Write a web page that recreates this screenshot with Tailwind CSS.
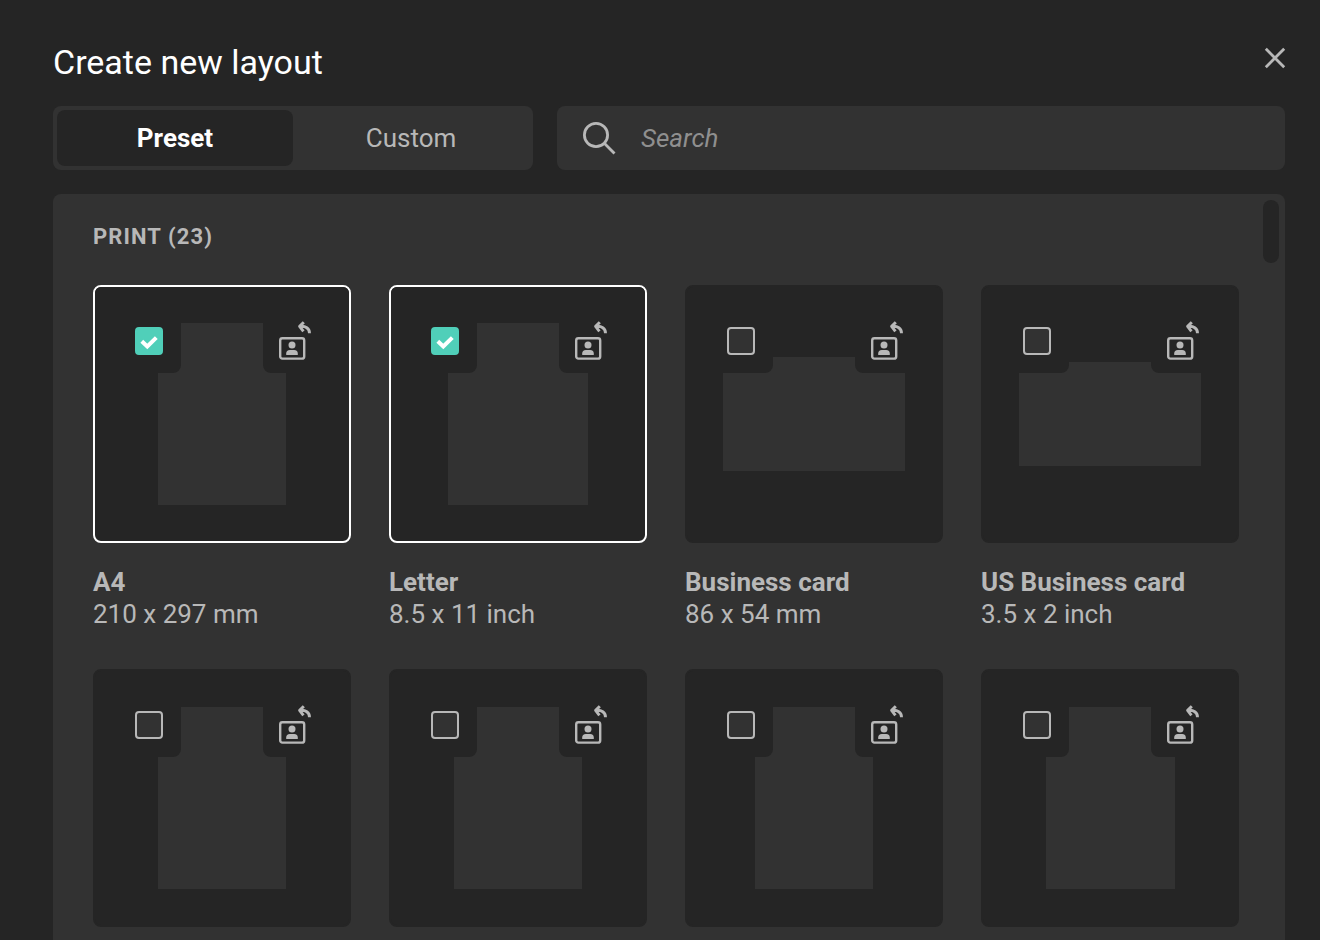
<!DOCTYPE html>
<html lang="en">
<head>
<meta charset="utf-8">
<title>Create new layout</title>
<script src="https://cdn.jsdelivr.net/npm/@tailwindcss/browser@4"></script>
</head>
<body class="bg-[#252525] font-['Roboto',sans-serif] text-[26px] leading-8 text-[#b8b8b8]">
<svg class="hidden" aria-hidden="true">
  <symbol id="orient" viewBox="0 0 40 40">
    <rect x="5.2" y="17.2" width="24" height="20.400" rx="2.200" fill="none" stroke="currentColor" stroke-width="2.400"/>
    <circle cx="17" cy="24" r="3.500" fill="currentColor"/>
    <path d="M11.200 33.900v-1.300q0-3.700 3.700-3.700h4.200q3.700 0 3.700 3.700v1.300z" fill="currentColor"/>
    <path d="M28.800 1.200L24.600 5.400L28.400 10.400M25 5.400C30.500 4.800 34.500 7.200 34.500 12.200" fill="none" stroke="currentColor" stroke-width="2.900" stroke-linejoin="round"/>
  </symbol>
  <symbol id="tick" viewBox="0 0 28 28">
    <path d="M6.800 14.200L12.300 19.400L21.300 10.600" fill="none" stroke="currentColor" stroke-width="4"/>
  </symbol>
</svg>
<main class="flex h-screen flex-col overflow-hidden pl-[53px] pr-[35px]">
  <header class="flex items-start justify-between pt-10">
    <h1 class="text-[34px] leading-[44px] text-white">Create new layout</h1>
    <button type="button" aria-label="Close" class="mt-2 h-5 w-5">
      <svg viewBox="0 0 20 20" class="h-5 w-5 overflow-visible" fill="none" stroke="currentColor" stroke-width="2.800"><path d="M0.800 0.800L19.200 19.200M19.200 0.800L0.800 19.200"/></svg>
    </button>
  </header>
  <div class="mt-[22px] flex shrink-0 gap-6">
    <div role="tablist" class="flex h-16 w-[480px] rounded-lg bg-[#323232] p-1">
      <button type="button" role="tab" aria-selected="true" class="flex-1 rounded-lg bg-[#252525] font-bold text-white">Preset</button>
      <button type="button" role="tab" aria-selected="false" class="flex-1 rounded-lg">Custom</button>
    </div>
    <label class="flex h-16 flex-1 items-center gap-6 rounded-lg bg-[#323232] px-6">
      <svg viewBox="0 0 36 36" class="h-9 w-9 shrink-0" fill="none" stroke="currentColor" stroke-width="2.800"><circle cx="15" cy="15" r="11.600"/><path d="M23.300 23.300L33.500 33.500"/></svg>
      <input type="search" aria-label="Search" placeholder="Search" class="w-full bg-transparent italic outline-none placeholder:text-[#8f8f8f]">
    </label>
  </div>
  <section class="relative mt-6 min-h-0 flex-1 overflow-hidden rounded-t-lg bg-[#323232] pl-10 pr-[46px] pt-[27px]">
    <div class="absolute right-1.5 top-1.5 h-[63px] w-4 rounded-full bg-[#252525]"></div>
    <h2 class="text-[22px] font-bold tracking-wider">PRINT (23)</h2>
    <ul id="presets" class="mt-8 grid grid-cols-4 gap-[38px]"></ul>
  </section>
</main>
<script>
  // name, dimensions, preview width, preview height, selected
  const presets = [
    ['A4', '210 x 297 mm', 128, 182, true],
    ['Letter', '8.5 x 11 inch', 140, 182, true],
    ['Business card', '86 x 54 mm', 182, 114, false],
    ['US Business card', '3.5 x 2 inch', 182, 104, false],
    ['', '', 128, 182, false],
    ['', '', 128, 182, false],
    ['', '', 118, 182, false],
    ['', '', 129, 182, false]
  ];
  document.getElementById('presets').innerHTML = presets.map(([name, size, w, h, on], i) => `
    <li>
      <div class="relative flex aspect-square items-center justify-center rounded-lg border-2 bg-[#252525] ${on ? 'border-white' : 'border-[#252525]'}">
        <div class="bg-[#323232]" style="width:${w}px;height:${h}px"></div>
        <div class="absolute left-0 top-0 h-[86px] w-[86px] rounded-br-lg rounded-tl-md bg-[#252525] pl-10 pt-10">
          <div class="grid h-7 w-7">
            <input type="checkbox" id="preset-${i}" aria-label="${name || 'Preset ' + (i + 1)}" ${on ? 'checked' : ''} class="col-start-1 row-start-1 h-7 w-7 appearance-none rounded border-2 border-[#b8b8b8] bg-[#323232] checked:border-[#50cfb9] checked:bg-[#50cfb9]">
            ${on ? '<svg class="pointer-events-none col-start-1 row-start-1 h-7 w-7 text-white"><use href="#tick"/></svg>' : ''}
          </div>
        </div>
        <button type="button" aria-label="Change orientation" class="absolute right-0 top-0 flex h-[86px] w-[86px] items-start rounded-bl-lg rounded-tr-md bg-[#252525] pl-3 pt-[34px]">
          <svg class="h-10 w-10"><use href="#orient"/></svg>
        </button>
      </div>
      <label for="preset-${i}" class="mb-px mt-[23px] block h-16"><span class="block font-bold">${name}</span><span class="block">${size}</span></label>
    </li>`).join('');
</script>
</body>
</html>
